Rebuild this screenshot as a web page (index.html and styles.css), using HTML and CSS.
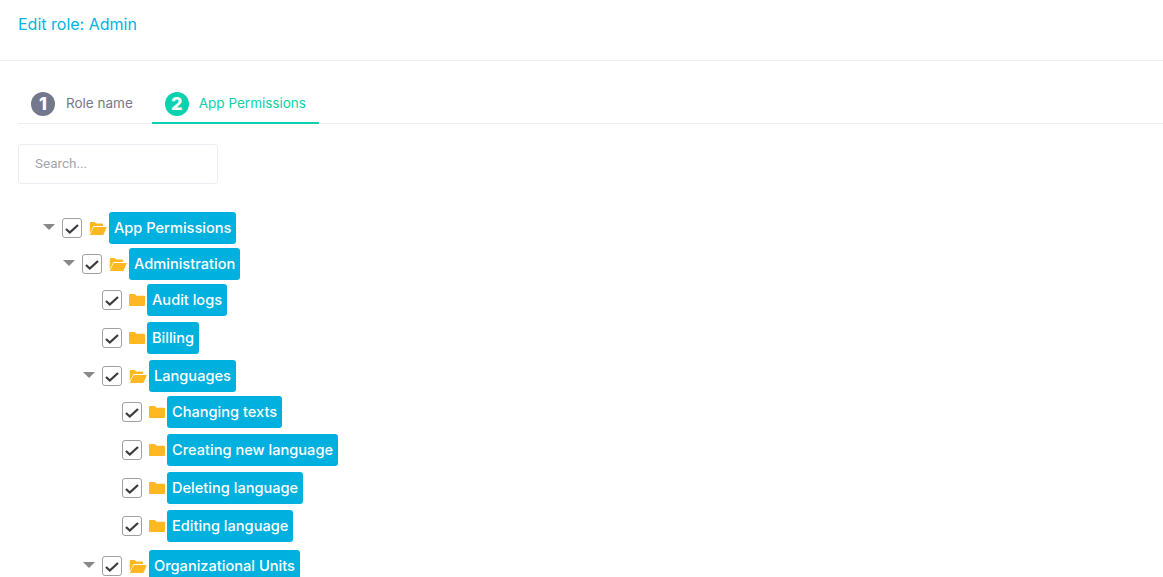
FILE: index.html
```html
<!DOCTYPE html>
<html lang="en">
<head>
    <meta charset="UTF-8">
    <title>Edit role: Admin</title>
    <link rel="stylesheet" href="styles.css">
</head>
<body>
    <svg class="icon-defs" width="0" height="0">
        <symbol id="folder" viewBox="0 0 16 12">
            <path d="M1 0h4.800l1.700 1.800H15a1 1 0 0 1 1 1V11a1 1 0 0 1-1 1H1a1 1 0 0 1-1-1V1a1 1 0 0 1 1-1z" fill="#ffb822"/>
        </symbol>
        <symbol id="folder-open" viewBox="0 0 18 13">
            <path d="M.8 11.500V1a1 1 0 0 1 1-1h3.800l1.500 1.600h6a1 1 0 0 1 1 1V4H4.400z" fill="#ffb822"/>
            <path d="M4.600 5h13.200l-3.400 8H.8z" fill="#ffb822"/>
        </symbol>
        <symbol id="check" viewBox="0 0 14 10">
            <path d="M1 5l3.800 3.500L13 1" fill="none" stroke="#3a3a40" stroke-width="2.200"/>
        </symbol>
    </svg>

    <!-- Title -->
    <div class="page-header">
        <h1 class="page-title">Edit role: Admin</h1>
    </div>

    <div class="page-body">
        <!-- Tabs -->
        <div class="tabs">
            <div class="tab">
                <span class="tab-number">1</span>
                <span class="tab-label">Role name</span>
            </div>
            <div class="tab active">
                <span class="tab-number">2</span>
                <span class="tab-label">App Permissions</span>
            </div>
        </div>

        <input class="search-input" type="text" placeholder="Search...">

        <!-- Permission tree -->
        <ul class="tree">
            <li>
                <div class="node parent">
                    <span class="caret"></span>
                    <span class="checkbox"><svg><use href="#check"/></svg></span>
                    <svg class="folder-open"><use href="#folder-open"/></svg>
                    <span class="label">App Permissions</span>
                </div>
                <ul class="tree">
                    <li>
                        <div class="node parent">
                            <span class="caret"></span>
                            <span class="checkbox"><svg><use href="#check"/></svg></span>
                            <svg class="folder-open"><use href="#folder-open"/></svg>
                            <span class="label">Administration</span>
                        </div>
                        <ul class="tree">
                            <li>
                                <div class="node">
                                    <span class="no-caret"></span>
                                    <span class="checkbox"><svg><use href="#check"/></svg></span>
                                    <svg class="folder"><use href="#folder"/></svg>
                                    <span class="label">Audit logs</span>
                                </div>
                            </li>
                            <li>
                                <div class="node">
                                    <span class="no-caret"></span>
                                    <span class="checkbox"><svg><use href="#check"/></svg></span>
                                    <svg class="folder"><use href="#folder"/></svg>
                                    <span class="label">Billing</span>
                                </div>
                            </li>
                            <li>
                                <div class="node parent">
                                    <span class="caret"></span>
                                    <span class="checkbox"><svg><use href="#check"/></svg></span>
                                    <svg class="folder-open"><use href="#folder-open"/></svg>
                                    <span class="label">Languages</span>
                                </div>
                                <ul class="tree group-end">
                                    <li>
                                        <div class="node">
                                            <span class="no-caret"></span>
                                            <span class="checkbox"><svg><use href="#check"/></svg></span>
                                            <svg class="folder"><use href="#folder"/></svg>
                                            <span class="label">Changing texts</span>
                                        </div>
                                    </li>
                                    <li>
                                        <div class="node">
                                            <span class="no-caret"></span>
                                            <span class="checkbox"><svg><use href="#check"/></svg></span>
                                            <svg class="folder"><use href="#folder"/></svg>
                                            <span class="label">Creating new language</span>
                                        </div>
                                    </li>
                                    <li>
                                        <div class="node">
                                            <span class="no-caret"></span>
                                            <span class="checkbox"><svg><use href="#check"/></svg></span>
                                            <svg class="folder"><use href="#folder"/></svg>
                                            <span class="label">Deleting language</span>
                                        </div>
                                    </li>
                                    <li>
                                        <div class="node">
                                            <span class="no-caret"></span>
                                            <span class="checkbox"><svg><use href="#check"/></svg></span>
                                            <svg class="folder"><use href="#folder"/></svg>
                                            <span class="label">Editing language</span>
                                        </div>
                                    </li>
                                </ul>
                            </li>
                            <li>
                                <div class="node parent">
                                    <span class="caret"></span>
                                    <span class="checkbox"><svg><use href="#check"/></svg></span>
                                    <svg class="folder-open"><use href="#folder-open"/></svg>
                                    <span class="label">Organizational Units</span>
                                </div>
                            </li>
                        </ul>
                    </li>
                </ul>
            </li>
        </ul>
    </div>
</body>
</html>
```

FILE: styles.css
```css
html, body {
    height: 100%;
    overflow: hidden;
}

body {
    margin: 0;
    background-color: #ffffff;
    font-family: "Inter", "Open Sans", sans-serif;
}

.icon-defs {
    display: block;
    height: 0;
}

/* Page title */
.page-header {
    height: 60px;
    padding: 0 18px;
    border-bottom: 1px solid #ebedf2;
}

.page-title {
    margin: 0;
    padding-top: 14px;
    font-size: 16px;
    font-weight: 400;
    line-height: 20px;
    color: #00b5e2;
}

.page-body {
    padding-left: 18px;
}

/* Tabs */
.tabs {
    display: flex;
    height: 63px;
    border-bottom: 1px solid #ebedf2;
    box-sizing: border-box;
}

.tab {
    display: flex;
    align-items: center;
    gap: 11px;
    height: 63px;
    padding: 25px 13px 0;
    border-bottom: 2px solid transparent;
    box-sizing: border-box;
    font-size: 13.500px;
    color: #74788d;
}

.tab:first-child {
    margin-right: 6px;
}

.tab.active {
    gap: 10px;
    color: #0ad1ae;
    border-bottom-color: #0ad1ae;
}

.tab-label {
    padding-bottom: 2px;
}

.tab-number {
    width: 24px;
    height: 24px;
    border-radius: 50%;
    background-color: #74788d;
    color: #ffffff;
    font-size: 18px;
    font-weight: 800;
    line-height: 24px;
    text-align: center;
}

.tab.active .tab-number {
    background-color: #0ad1ae;
}

/* Search */
.search-input {
    display: block;
    width: 200px;
    height: 40px;
    margin-top: 20px;
    padding: 0 16px 2px;
    border: 1px solid #ebedf2;
    border-radius: 3px;
    box-sizing: border-box;
    font-family: "Roboto", sans-serif;
    font-size: 13.500px;
    outline: none;
}

.search-input::placeholder {
    color: #a2a5b1;
}

/* Tree */
.tree {
    list-style: none;
    margin: 0;
    padding: 0 0 0 20px;
}

.page-body > .tree {
    margin-top: 28px;
    padding-left: 23px;
}

.group-end {
    padding-bottom: 2px;
}

.node {
    display: flex;
    align-items: center;
    height: 32px;
    margin-bottom: 6px;
}

.node.parent {
    margin-bottom: 4px;
}

.caret {
    width: 0;
    height: 0;
    margin: 0 7px 2px 2px;
    border-left: 6px solid transparent;
    border-right: 6px solid transparent;
    border-top: 6px solid #888888;
}

.no-caret {
    width: 21px;
    flex: none;
}

.checkbox {
    display: flex;
    align-items: center;
    justify-content: center;
    width: 20px;
    height: 20px;
    border: 1px solid #a0a0a0;
    border-radius: 3px;
    box-sizing: border-box;
    flex: none;
}

.checkbox svg {
    width: 14px;
    height: 10px;
    margin-top: 2px;
}

.folder {
    width: 16px;
    height: 12px;
    margin: 0 2px 0 7px;
    flex: none;
}

.folder-open {
    width: 18px;
    height: 13px;
    margin: 0 2px 0 7px;
    flex: none;
}

.label {
    display: block;
    height: 32px;
    padding: 0 5px;
    border-radius: 3px;
    background-color: #00b0de;
    color: #ffffff;
    font-size: 14.600px;
    font-weight: 500;
    line-height: 32px;
    white-space: nowrap;
}
```
